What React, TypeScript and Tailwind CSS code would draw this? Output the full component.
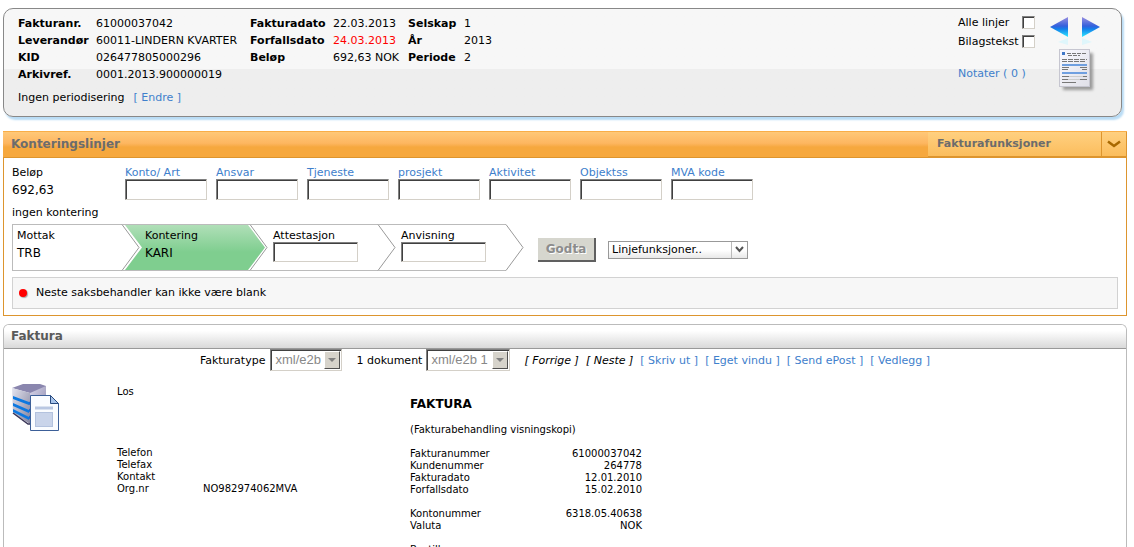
import React from "react"

type InvoiceRow = { label: string; value: string; alert?: boolean }[]

const invoiceRows: InvoiceRow[] = [
  [
    { label: "Fakturanr.", value: "61000037042" },
    { label: "Fakturadato", value: "22.03.2013" },
    { label: "Selskap", value: "1" },
  ],
  [
    { label: "Leverandør", value: "60011-LINDERN KVARTER" },
    { label: "Forfallsdato", value: "24.03.2013", alert: true },
    { label: "År", value: "2013" },
  ],
  [
    { label: "KID", value: "026477805000296" },
    { label: "Beløp", value: "692,63 NOK" },
    { label: "Periode", value: "2" },
  ],
  [{ label: "Arkivref.", value: "0001.2013.900000019" }],
]

const accountFields = ["Konto/ Art", "Ansvar", "Tjeneste", "prosjekt", "Aktivitet", "Objektss", "MVA kode"]

type Step = { label: string; value?: string; active?: boolean }

const steps: Step[] = [
  { label: "Mottak", value: "TRB" },
  { label: "Kontering", value: "KARI", active: true },
  { label: "Attestasjon" },
  { label: "Anvisning" },
]

const documentLinks = ["Skriv ut", "Eget vindu", "Send ePost", "Vedlegg"]

const supplierRows = [
  ["Telefon", ""],
  ["Telefax", ""],
  ["Kontakt", ""],
  ["Org.nr", "NO982974062MVA"],
]

const detailRows = [
  ["Fakturanummer", "61000037042"],
  ["Kundenummer", "264778"],
  ["Fakturadato", "12.01.2010"],
  ["Forfallsdato", "15.02.2010"],
  ["", ""],
  ["Kontonummer", "6318.05.40638"],
  ["Valuta", "NOK"],
  ["", ""],
  ["Bestiller", ""],
]

const insetBorder =
  "border border-t-[#808080] border-l-[#808080] border-r-[#d4d0c8] border-b-[#d4d0c8] shadow-[inset_1px_1px_0_#404040] bg-white"

function ArrowIcon({ direction }: { direction: "left" | "right" }) {
  const id = `arrow-${direction}`
  const left = direction === "left"
  return (
    <svg width="18" height="28" viewBox="0 0 18 28" aria-hidden="true">
      <defs>
        <linearGradient id={id} x1="0" y1="0" x2="0" y2="1">
          <stop offset="0" stopColor="#9a90e0" />
          <stop offset="0.45" stopColor="#3460dc" />
          <stop offset="0.6" stopColor="#1280ea" />
          <stop offset="1" stopColor="#30e8ff" />
        </linearGradient>
      </defs>
      <path d={left ? "M18 0V20L0 10Z" : "M0 0V20L18 10Z"} fill={`url(#${id})`} />
      <path d={left ? "M18 21V28L8 25Z" : "M0 21V28L10 25Z"} fill="#dff6fb" />
    </svg>
  )
}

function PaperIcon() {
  return (
    <svg width="38" height="46" viewBox="0 0 38 46" aria-hidden="true">
      <defs>
        <filter id="paper-shadow" x="-20%" y="-20%" width="150%" height="150%">
          <feGaussianBlur stdDeviation="1.5" />
        </filter>
        <linearGradient id="paper-fill" x1="0" y1="0" x2="1" y2="1">
          <stop offset="0" stopColor="#fafaff" />
          <stop offset="1" stopColor="#dfdfe8" />
        </linearGradient>
      </defs>
      <rect x="5" y="5" width="30" height="37" fill="#777" opacity="0.7" filter="url(#paper-shadow)" />
      <rect x="1.5" y="1.5" width="30" height="37" fill="url(#paper-fill)" stroke="#c6c6d0" />
      <rect x="4" y="4" width="3" height="3" fill="#3f78c8" />
      <path d="M9 5.5H28M10 7.5H22" stroke="#777" strokeDasharray="4 1" />
      <path d="M4 11.5H29M4 13.5H28" stroke="#777" strokeDasharray="5 1" />
      <path d="M4 17H29M4 25H29" stroke="#6f9fe0" strokeWidth="2" />
      <path d="M4 19.5H11M22 19.5H29M4 21.5H10M24 21.5H29" stroke="#777" />
      <path d="M4 28.5H11M25 28.5H29M4 31.5H10M22 31.5H29M4 34.5H18" stroke="#777" />
      <path d="M11 28.5H25M10 31.5H22" stroke="#ccc" />
    </svg>
  )
}

function ArchiveIcon() {
  return (
    <svg width="47" height="47" viewBox="0 0 47 47" className="shrink-0" aria-hidden="true">
      <defs>
        <linearGradient id="server-front" x1="0" y1="0" x2="1" y2="1">
          <stop offset="0" stopColor="#e4e4f0" />
          <stop offset="1" stopColor="#82829c" />
        </linearGradient>
        <linearGradient id="server-side" x1="0" y1="0" x2="1" y2="1">
          <stop offset="0" stopColor="#d6d4e8" />
          <stop offset="1" stopColor="#8c88ac" />
        </linearGradient>
      </defs>
      <path d="M0 4L11 0H28L34 2V11L18 9Z" fill="#8a86ae" />
      <path d="M0 4L18 9V40L1 29Z" fill="url(#server-front)" />
      <path d="M18 9L34 2V36L18 40Z" fill="url(#server-side)" />
      <path d="M1 29L16 40H20" fill="none" stroke="#3a3658" strokeWidth="1.5" />
      <path d="M1 12L17 18V21L1 15ZM1 19L17 26V29L1 22ZM1 25L17 33V36L1 28Z" fill="#0d78e0" />
      <path d="M17 18L30 13V16L17 21ZM17 25L30 20V23L17 28ZM17 32L30 27V30L17 35Z" fill="#1c68d4" />
      <path d="M18.5 11.5H38.5L46.5 19.5V46.5H18.5Z" fill="#fafcff" stroke="#3c5f98" />
      <path d="M38.5 11.5V19.5H46.5Z" fill="#a8c4ea" stroke="#294b80" />
      <path d="M23 24H41" stroke="#b9c7e2" strokeWidth="3" />
      <rect x="23.5" y="28.5" width="17" height="14" fill="#c9d4ea" stroke="#b3c2de" />
    </svg>
  )
}

function StepShape({ first, active }: { first: boolean; active?: boolean }) {
  const start = first ? 18 : 0
  return (
    <svg width="148" height="47" viewBox="0 0 148 47" className="absolute top-0 -left-[18px]" aria-hidden="true">
      {active && (
        <>
          <defs>
            <linearGradient id="step-active" x1="0" y1="0" x2="0" y2="1">
              <stop offset="0" stopColor="#b0dfb8" />
              <stop offset="0.6" stopColor="#7fce8f" />
              <stop offset="1" stopColor="#7fce8f" />
            </linearGradient>
          </defs>
          <path d="M3 1H126L143 23.5L126 46H3L20 23.5Z" fill="url(#step-active)" />
        </>
      )}
      <path d={`M${start} 0.5H128M${start} 46.5H128`} stroke="#bbb" fill="none" />
      {first && <path d="M18.5 0V47" stroke="#bbb" />}
      <path d="M128 0.5L145 23.5L128 46.5" stroke="#999" fill="none" />
    </svg>
  )
}

function InvoiceHeader() {
  return (
    <header className="mr-[5px] flex justify-between rounded-[10px] border border-[#888] bg-linear-to-b from-[#f7f7f7] from-56% to-[#eee] to-56% pt-1.5 pb-2.5 pl-3.5 pr-[21px] shadow-[2px_3px_2px_#b9dcf5]">
      <div>
        <table className="table-fixed leading-[17px]">
          <colgroup>
            <col className="w-[78px]" />
            <col className="w-[154px]" />
            <col className="w-[83px]" />
            <col className="w-[75px]" />
            <col className="w-14" />
            <col className="w-14" />
          </colgroup>
          <tbody>
            {invoiceRows.map((row) => (
              <tr key={row[0].label}>
                {row.map((cell) => (
                  <React.Fragment key={cell.label}>
                    <th scope="row" className="p-0 text-left font-bold">
                      {cell.label}
                    </th>
                    <td className={cell.alert ? "p-0 text-[#f00]" : "p-0"}>{cell.value}</td>
                  </React.Fragment>
                ))}
              </tr>
            ))}
          </tbody>
        </table>
        <p className="mt-1.5 leading-[17px]">
          Ingen periodisering
          <a href="#endre" className="ml-[9px] text-[#4080cc]">
            [ Endre ]
          </a>
        </p>
      </div>

      <div className="flex gap-[15px]">
        <div className="flex w-[77px] flex-col">
          {["Alle linjer", "Bilagstekst"].map((label) => (
            <label key={label} className="flex h-[19px] items-start justify-between leading-4 whitespace-nowrap">
              {label}
              <input type="checkbox" className={`mt-px size-[13px] shrink-0 appearance-none ${insetBorder}`} />
            </label>
          ))}
          <a href="#notater" className="mt-3 leading-[17px] whitespace-nowrap text-[#4080cc]">
            Notater ( 0 )
          </a>
        </div>
        <div className="flex flex-col items-center pt-0.5">
          <div className="flex gap-3.5">
            <button type="button" aria-label="Forrige faktura">
              <ArrowIcon direction="left" />
            </button>
            <button type="button" aria-label="Neste faktura">
              <ArrowIcon direction="right" />
            </button>
          </div>
          <button type="button" aria-label="Vis bilag" className="mt-[3px] ml-1">
            <PaperIcon />
          </button>
        </div>
      </div>
    </header>
  )
}

function AccountingPanel() {
  return (
    <section className="mt-3.5 border border-t-0 border-[#dd952e] text-black">
      <div className="-mx-px flex h-[27px] items-stretch justify-between border-t border-b border-t-[#f9ae48] border-b-[#dd952e] bg-linear-to-b from-[#ffc878] via-[#fdb660] via-45% to-[#f6a83e] to-60%">
        <h2 className="pl-2 text-xs leading-[25px] font-bold text-[#6c6c6c]">Konteringslinjer</h2>
        <button
          type="button"
          className="flex w-[199px] items-stretch border-b border-[#dd952e] bg-linear-to-b from-[#ffd080] to-[#fbbd5c] text-left font-bold text-[#6c6c6c]"
        >
          <span className="flex-1 pl-[9px] leading-6">Fakturafunksjoner</span>
          <span className="flex w-[26px] items-center justify-center border-x border-[#dd952e]">
            <svg width="14" height="8" viewBox="0 0 14 8" aria-hidden="true">
              <path d="M1 1.5L7 6L13 1.5" fill="none" stroke="#a86800" strokeWidth="2.5" />
            </svg>
          </span>
        </button>
      </div>

      <div className="px-2 pt-[9px] pb-1.5">
        <div className="flex">
          <div className="w-[113px]">
            <div className="leading-3">Beløp</div>
            <div className="text-xs leading-[22px]">692,63</div>
          </div>
          <div className="flex gap-[9px]">
            {accountFields.map((label) => (
              <div key={label} className="w-[82px]">
                <label htmlFor={label} className="block leading-3 whitespace-nowrap text-[#4080cc]">
                  {label}
                </label>
                <input id={label} type="text" className={`block h-[21px] w-full px-1 ${insetBorder}`} />
              </div>
            ))}
          </div>
        </div>
        <p className="mt-1 leading-4">ingen kontering</p>

        <div className="mt-[3px] flex items-center">
          <ol className="flex h-[47px]">
            {steps.map((step, i) => (
              <li key={step.label} className="relative w-32 pl-[5px]">
                <StepShape first={i === 0} active={step.active} />
                <div className="relative pt-[5px]">
                  {step.value ? (
                    <>
                      <div className="leading-[13px]">{step.label}</div>
                      <div className="text-xs leading-[22px]">{step.value}</div>
                    </>
                  ) : (
                    <>
                      <label htmlFor={step.label} className="block leading-[13px]">
                        {step.label}
                      </label>
                      <input id={step.label} type="text" className={`block h-5 w-[85px] px-1 ${insetBorder}`} />
                    </>
                  )}
                </div>
              </li>
            ))}
          </ol>
          <button
            type="button"
            disabled
            className="mt-1 ml-3.5 h-6 w-[58px] border-r-2 border-b-2 border-[#606060] bg-[#d6d6ce] text-xs font-bold text-[#8c8c8c] [text-shadow:1px_1px_0_#fff]"
          >
            Godta
          </button>
          <div className="relative mt-1 ml-3 w-[140px]">
            <select
              aria-label="Linjefunksjoner"
              className="block h-[18px] w-full appearance-none border border-[#999] bg-linear-to-b from-white from-50% to-[#e8e8e8] pl-[3px] leading-4"
            >
              <option>Linjefunksjoner..</option>
            </select>
            <span className="pointer-events-none absolute inset-y-px right-px flex w-4 items-center justify-center border-l border-[#bbb]">
              <svg width="9" height="7" viewBox="0 0 9 7" aria-hidden="true">
                <path d="M1 1L4.5 5L8 1" fill="none" stroke="#555" strokeWidth="2" />
              </svg>
            </span>
          </div>
        </div>

        <div role="alert" className="mt-1.5 flex h-8 items-center border border-[#d2d2d2] bg-[#f7f7f7] pl-1.5">
          <span className="mr-[9px] size-2 rounded-full bg-[#f00] shadow-[1px_1px_1px_#aaa]" />
          Neste saksbehandler kan ikke være blank
        </div>
      </div>
    </section>
  )
}

function DocumentSelect({ id, value, className }: { id: string; value: string; className: string }) {
  return (
    <div className={`relative ${className}`}>
      <select
        id={id}
        disabled
        className={`block h-[22px] w-full appearance-none pl-1 font-['Liberation_Sans',Arial,sans-serif] text-[13px] leading-5 text-[#888] opacity-100 ${insetBorder}`}
      >
        <option>{value}</option>
      </select>
      <span className="pointer-events-none absolute inset-y-0.5 right-0.5 flex w-4 items-center justify-center border border-t-white border-l-white border-r-[#505050] border-b-[#505050] bg-[#d6d3cb]">
        <span className="border-x-4 border-t-4 border-x-transparent border-t-[#808080]" />
      </span>
    </div>
  )
}

function DocumentPanel() {
  return (
    <section className="mt-2 min-h-0 flex-1 overflow-hidden rounded-t-md border border-b-0 border-[#bbb]">
      <h2 className="h-6 border-b border-[#999] bg-linear-to-b from-white from-25% to-[#d9d9d9] pl-[7px] text-xs leading-[22px] font-bold text-[#5a5a5a]">
        Faktura
      </h2>
      <div className="flex items-end justify-center leading-5 whitespace-nowrap">
        <label htmlFor="invoice-type" className="mr-[5px]">
          Fakturatype
        </label>
        <DocumentSelect id="invoice-type" value="xml/e2b" className="w-[72px]" />
        <label htmlFor="document" className="mr-1 ml-3.5">
          1 dokument
        </label>
        <DocumentSelect id="document" value="xml/e2b 1" className="w-[84px]" />
        <span className="ml-3.5 italic">[ Forrige ]</span>
        <span className="ml-[7px] italic">[ Neste ]</span>
        {documentLinks.map((link) => (
          <a key={link} href="#dokument" className="ml-[7px] text-[#4080cc]">
            [ {link} ]
          </a>
        ))}
      </div>

      <div className="flex pt-[13px] pl-2 text-[10px] leading-3">
        <ArchiveIcon />
        <div className="ml-[58px] w-[293px] pt-0.5">
          <div>Los</div>
          <table className="mt-[49px]">
            <tbody>
              {supplierRows.map(([label, value]) => (
                <tr key={label}>
                  <th scope="row" className="w-[86px] p-0 text-left font-normal">
                    {label}
                  </th>
                  <td className="p-0">{value}</td>
                </tr>
              ))}
            </tbody>
          </table>
        </div>
        <div className="w-[232px] pt-3">
          <h3 className="text-xs leading-4 font-bold">FAKTURA</h3>
          <p className="mt-3">(Fakturabehandling visningskopi)</p>
          <table className="mt-3 w-full">
            <tbody>
              {detailRows.map(([label, value], i) => (
                <tr key={i} className="h-3">
                  <th scope="row" className="p-0 text-left font-normal">
                    {label}
                  </th>
                  <td className="p-0 text-right">{value}</td>
                </tr>
              ))}
            </tbody>
          </table>
        </div>
      </div>
    </section>
  )
}

export default function App() {
  return (
    <main className="flex h-screen flex-col overflow-hidden bg-white pt-2 pr-[7px] pl-[3px] font-['DejaVu_Sans',Verdana,sans-serif] text-[11px] text-black">
      <InvoiceHeader />
      <AccountingPanel />
      <DocumentPanel />
    </main>
  )
}
